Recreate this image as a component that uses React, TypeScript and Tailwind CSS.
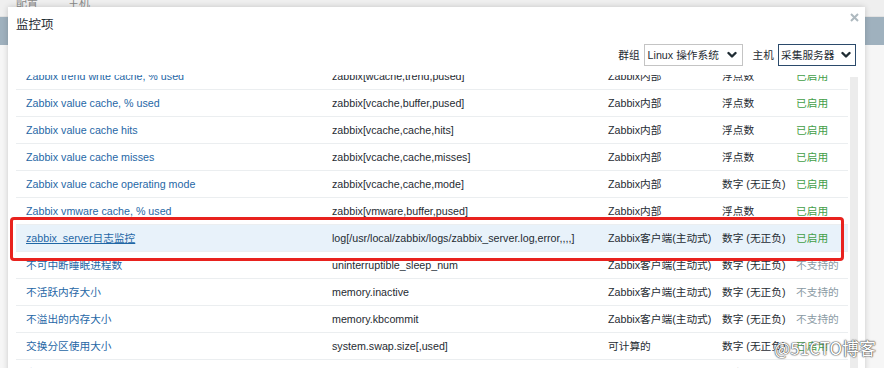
import React from "react";

type Row = {
  name: string;
  key: string;
  type: string;
  vtype: string;
  status: string;
  selected?: boolean;
};

const rows: Row[] = [
  { name: "Zabbix trend write cache, % used", key: "zabbix[wcache,trend,pused]", type: "Zabbix内部", vtype: "浮点数", status: "已启用" },
  { name: "Zabbix value cache, % used", key: "zabbix[vcache,buffer,pused]", type: "Zabbix内部", vtype: "浮点数", status: "已启用" },
  { name: "Zabbix value cache hits", key: "zabbix[vcache,cache,hits]", type: "Zabbix内部", vtype: "浮点数", status: "已启用" },
  { name: "Zabbix value cache misses", key: "zabbix[vcache,cache,misses]", type: "Zabbix内部", vtype: "浮点数", status: "已启用" },
  { name: "Zabbix value cache operating mode", key: "zabbix[vcache,cache,mode]", type: "Zabbix内部", vtype: "数字 (无正负)", status: "已启用" },
  { name: "Zabbix vmware cache, % used", key: "zabbix[vmware,buffer,pused]", type: "Zabbix内部", vtype: "浮点数", status: "已启用" },
  { name: "zabbix_server日志监控", key: "log[/usr/local/zabbix/logs/zabbix_server.log,error,,,,]", type: "Zabbix客户端(主动式)", vtype: "数字 (无正负)", status: "已启用", selected: true },
  { name: "不可中断睡眠进程数", key: "uninterruptible_sleep_num", type: "Zabbix客户端(主动式)", vtype: "数字 (无正负)", status: "不支持的" },
  { name: "不活跃内存大小", key: "memory.inactive", type: "Zabbix客户端(主动式)", vtype: "数字 (无正负)", status: "不支持的" },
  { name: "不溢出的内存大小", key: "memory.kbcommit", type: "Zabbix客户端(主动式)", vtype: "数字 (无正负)", status: "不支持的" },
  { name: "交换分区使用大小", key: "system.swap.size[,used]", type: "可计算的", vtype: "数字 (无正负)", status: "已启用" },
  { name: "交换分区空闲大小", key: "system.swap.size[,free]", type: "可计算的", vtype: "数字 (无正负)", status: "已启用" },
];

function Chevron() {
  return (
    <svg width="10" height="8" viewBox="0 0 10 8" className="shrink-0">
      <path d="M1.5 2 L5 5.5 L8.5 2" fill="none" stroke="#1f2c33" strokeWidth="2.4" strokeLinecap="round" strokeLinejoin="round" />
    </svg>
  );
}

export default function App() {
  const font = "font-['Liberation_Sans','Noto_Sans_CJK_SC',sans-serif]";
  return (
    <div className={`relative w-[884px] h-[368px] overflow-hidden bg-[#f4f4f4] ${font}`}>
      {/* background page */}
      <div className="flex flex-col h-full">
        <div className="h-[17px] bg-[#efefef] border-b border-[#e2e2e2] flex items-start gap-[30px] pl-[16px] text-[11px] text-[#888] leading-[6px]">
          <span>配置</span>
          <span>主机</span>
        </div>
        <div className="h-[28px] bg-[#9fb1be]" />
        <div className="flex-1 bg-[#f6f6f6]" />
      </div>

      {/* modal */}
      <div className="absolute left-[8px] top-[7px] w-[857px] h-[400px] bg-white shadow-[0_0_6px_rgba(0,0,0,0.18)] flex flex-col">
        <div className="flex items-start justify-between pl-[8px] pr-[6px] pt-[9px]">
          <h4 className="text-[12.5px] leading-[18px] text-[#1f2c33]">监控项</h4>
          <svg width="9" height="9" viewBox="0 0 9 9" className="mt-[-3px]">
            <path d="M1 1 L8 8 M8 1 L1 8" stroke="#aeb9bf" strokeWidth="2" />
          </svg>
        </div>

        <div className="mt-[10px] flex items-center justify-end pr-[9px] text-[10.7px] text-[#1f2c33] whitespace-nowrap">
          <span className="mr-[4px]">群组</span>
          <div className="w-[99px] h-[22px] border border-[#c4c4c4] flex items-center justify-between pl-[3px] pr-[5px]">
            <span>Linux 操作系统</span>
            <Chevron />
          </div>
          <span className="ml-[10px] mr-[4px]">主机</span>
          <div className="w-[78px] h-[22px] border border-[#2b4a6b] flex items-center justify-between pl-[2px] pr-[4px]">
            <span>采集服务器</span>
            <Chevron />
          </div>
        </div>

        <div className="mt-[9px] flex-1 flex px-[8px] pr-[7px] overflow-hidden">
          <div className="flex-1 mt-[-12px] flex flex-col">
            {rows.map((r, i) => (
              <div
                key={i}
                className={`h-[27px] shrink-0 grid grid-cols-[306px_276px_114px_74px_62px] items-center border-b border-[#ebeef0] text-[10.7px] whitespace-nowrap ${r.selected ? "bg-[#e8f2fa]" : ""}`}
              >
                <span className={`pl-[10px] text-[#1f67a6] ${r.selected ? "underline" : ""}`}>{r.name}</span>
                <span className="pl-[10px] text-[#1f2c33]">{r.key}</span>
                <span className="pl-[10px] text-[#1f2c33]">{r.type}</span>
                <span className="pl-[10px] text-[#1f2c33]">{r.vtype}</span>
                <span className={`pl-[10px] ${r.status === "已启用" ? "text-[#429e47]" : "text-[#8a9aa3]"}`}>{r.status}</span>
              </div>
            ))}
          </div>
          <div className="ml-[2px] w-[8px] bg-[#ececec] mt-[2px]" />
        </div>
      </div>

      {/* annotation red box */}
      <div className="absolute left-[10px] top-[217px] w-[834px] h-[44px] border-[3px] border-[#e8221e] rounded-[4px]" />

      {/* watermark */}
      <div className="absolute right-[8px] top-[337px] text-[17px] leading-[22px] text-white [text-shadow:0_0_1px_#444,0_0_1px_#444,0_0_2px_#666] font-['Noto_Sans_CJK_SC',sans-serif]">
        @51CTO博客
      </div>
    </div>
  );
}
